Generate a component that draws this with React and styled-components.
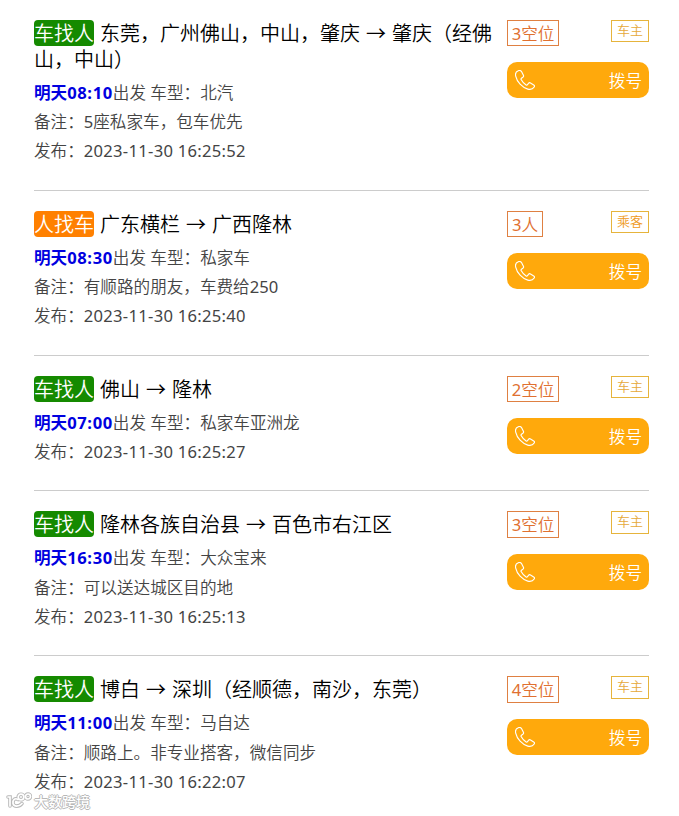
import React from 'react';
import styled, { createGlobalStyle } from 'styled-components';

const GlobalStyle = createGlobalStyle`
  body {
    margin: 0;
    background: #fff;
    font-family: "Noto Sans", "Noto Sans CJK SC", sans-serif;
    font-weight: 350;
    color: #000;
  }
`;

const Page = styled.main`
  position: relative;
  box-sizing: border-box;
  width: 679px;
  height: 816px;
  padding: 0 30px 0 34px;
  overflow: hidden;
`;

const Item = styled.article`
  box-sizing: border-box;
  display: flex;
  justify-content: space-between;
  height: ${(p) => p.$height}px;
  padding-top: 20px;
  border-bottom: 1px solid #ccc;
  &:last-of-type { border-bottom: 0; }
`;

const Info = styled.div`
  width: 462px;
`;

const Title = styled.h2`
  margin: 1px 0 5px;
  font-size: 20px;
  font-weight: 350;
  line-height: 26px;
`;

const Tag = styled.span`
  display: inline-block;
  height: 26px;
  margin: -1px 6px 0 0;
  border-radius: 4px;
  vertical-align: top;
  line-height: 28px;
  color: #fff;
  background: ${(p) => (p.$passenger ? '#ff8000' : '#158a00')};
`;

const Arrow = styled.span`
  display: inline-block;
  width: 32px;
  line-height: 24px;
  vertical-align: top;
  text-align: center;
  font-family: "Noto Sans CJK SC", sans-serif;
  font-weight: 400;
`;

const Line = styled.p`
  margin: 0;
  height: 29.1px;
  font-size: 16.6px;
  line-height: 29.1px;
  color: #444;
  white-space: nowrap;
`;

const Digits = styled.span`
  font-weight: 400;
`;

const Stamp = styled(Digits)`
  letter-spacing: 0.28px;
`;

const When = styled.strong`
  font-weight: 700;
  color: #0000e0;
`;

const Clock = styled.span`
  letter-spacing: 0.6px;
`;

const Side = styled.aside`
  width: 142px;
`;

const Badges = styled.div`
  display: flex;
  justify-content: space-between;
  align-items: flex-start;
  height: 42.2px;
`;

const Seats = styled.span`
  box-sizing: border-box;
  width: ${(p) => (p.$passenger ? 36 : 52)}px;
  height: 26.2px;
  border: 1px solid #df8042;
  font-size: 16.6px;
  line-height: 25px;
  text-align: center;
  white-space: nowrap;
  color: #e07030;
`;

const Role = styled.span`
  box-sizing: border-box;
  width: 38px;
  height: 22.2px;
  border: 1px solid #e6b43c;
  font-size: 13px;
  line-height: 19px;
  text-align: center;
  color: ${(p) => (p.$passenger ? '#ef9a22' : '#e6a93a')};
`;

const CallButton = styled.button`
  box-sizing: border-box;
  display: flex;
  align-items: center;
  justify-content: space-between;
  width: 142px;
  height: 36px;
  padding: 0 7px 0 8px;
  border: 0;
  border-radius: 10px;
  background: #ffa90c;
  color: #fff;
  font: 400 16.6px/36px "Noto Sans CJK SC", sans-serif;
  font-weight: 350;
`;

const PhoneSvg = styled.svg`
  display: block;
  width: 20px;
  height: 20px;
`;

const Watermark = styled.div`
  position: absolute;
  left: 6px;
  top: 791px;
  display: flex;
  align-items: center;
  gap: 2px;
  height: 20px;
  color: #fff;
  font: 500 14px/20px "Noto Sans CJK SC", sans-serif;
  text-shadow: 1px 0 #b8b8b8, -1px 0 #b8b8b8, 0 1px #b8b8b8, 0 -1px #b8b8b8;
`;

const LogoSvg = styled.svg`
  width: 26px;
  height: 18px;
`;

const Phone = () => (
  <PhoneSvg viewBox="0 0 20 20" fill="none" stroke="#fff" strokeWidth="1.15" strokeLinejoin="round">
    <path d="M3.3.7C1.2 1.4.1 3.5.7 6.2c1.2 5.6 6.5 11.5 12.1 12.9 2.8.7 5.2-.2 6.4-2.1.5-.8.3-1.5-.5-2l-3.2-2c-.8-.5-1.5-.3-2 .4l-1 1.3c-.4.5-.9.5-1.4.2-2-1.2-3.9-3.2-5-5.3-.3-.6-.1-1 .4-1.4l1.3-.9c.8-.5 1-1.2.6-2L6.5 1.6C6 .7 5.1.1 3.3.7Z" />
  </PhoneSvg>
);

const Logo = () => (
  <LogoSvg viewBox="0 0 26 18" fill="none" strokeLinecap="round">
    {[['#b8b8b8', 3.6], ['#fff', 1.7]].map(([stroke, strokeWidth]) => (
      <g key={stroke} stroke={stroke} strokeWidth={strokeWidth}>
        <path d="M2 5h2v9M12 7.500C9 5.500 6.500 8 7 11.500c1 3.500 6 3.500 9 0" />
        <circle cx="15" cy="5" r="2.800" />
        <circle cx="22" cy="4.500" r="2.500" />
      </g>
    ))}
  </LogoSvg>
);

const trips = [
  { height: 191, from: '东莞，广州佛山，中山，肇庆', to: '肇庆（经佛山，中山）', time: '08:10', car: '北汽', note: '5座私家车，包车优先', posted: '16:25:52', seats: '3空位' },
  { height: 165, passenger: true, from: '广东横栏', to: '广西隆林', time: '08:30', car: '私家车', note: '有顺路的朋友，车费给250', posted: '16:25:40', seats: '3人' },
  { height: 135.45, from: '佛山', to: '隆林', time: '07:00', car: '私家车亚洲龙', posted: '16:25:27', seats: '2空位' },
  { height: 165, from: '隆林各族自治县', to: '百色市右江区', time: '16:30', car: '大众宝来', note: '可以送达城区目的地', posted: '16:25:13', seats: '3空位' },
  { height: 159, from: '博白', to: '深圳（经顺德，南沙，东莞）', time: '11:00', car: '马自达', note: '顺路上。非专业搭客，微信同步', posted: '16:22:07', seats: '4空位' },
];

/* Latin digits take a regular weight beside the lighter Chinese text. */
const Mixed = ({ text }) =>
  text.split(/(\d+)/).filter(Boolean).map((part, i) =>
    /^\d/.test(part) ? <Digits key={i}>{part}</Digits> : part
  );

const Trip = ({ trip }) => (
  <Item $height={trip.height}>
    <Info>
      <Title>
        <Tag $passenger={trip.passenger}>{trip.passenger ? '人找车' : '车找人'}</Tag>
        {trip.from}<Arrow>→</Arrow>{trip.to}
      </Title>
      <Line><When>明天<Clock>{trip.time}</Clock></When>出发 车型：{trip.car}</Line>
      {trip.note && <Line>备注：<Mixed text={trip.note} /></Line>}
      <Line>发布：<Stamp>2023-11-30 {trip.posted}</Stamp></Line>
    </Info>
    <Side>
      <Badges>
        <Seats $passenger={trip.passenger}><Mixed text={trip.seats} /></Seats>
        <Role $passenger={trip.passenger}>{trip.passenger ? '乘客' : '车主'}</Role>
      </Badges>
      <CallButton type="button"><Phone />拨号</CallButton>
    </Side>
  </Item>
);

export default function App() {
  return (
    <>
      <GlobalStyle />
      <Page>
        {trips.map((trip) => <Trip key={trip.posted} trip={trip} />)}
        <Watermark><Logo />大数跨境</Watermark>
      </Page>
    </>
  );
}
